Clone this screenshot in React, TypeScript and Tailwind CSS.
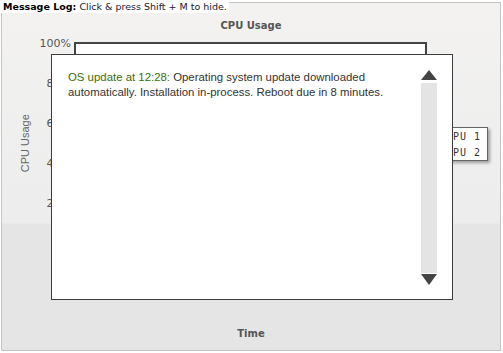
import React from "react";

const verdana = { fontFamily: '"DejaVu Sans", Verdana, sans-serif' };
const arial = { fontFamily: '"Liberation Sans", Arial, sans-serif' };

export default function App() {
  const labels = ["100%", "80%", "60%", "40%", "20%", "0%"];
  return (
    <div className="w-[503px] h-[353px] bg-white relative overflow-hidden">
      {/* chart frame */}
      <div className="absolute left-[1px] top-[2px] w-[500px] h-[349px] border border-[#c4c4c4] bg-[linear-gradient(to_bottom,#f3f2f1_0px,#ededed_220px,#e5e5e5_221px,#e5e5e5_100%)] flex flex-col">
        <div
          className="pt-[17px] h-[30px] text-center text-[10px] leading-[12px] font-bold text-[#555]"
          style={verdana}
        >
          CPU Usage
        </div>
        <div className="mt-[9px] flex relative">
          <div
            className="absolute -left-[4px] top-[95px] -rotate-90 origin-center text-[11px] text-[#666] whitespace-nowrap w-[54px] text-center"
            style={arial}
          >
            CPU Usage
          </div>
          <div
            className="w-[70px] -mt-[4px] flex flex-col gap-[28px] items-end pr-[1px] text-[11px] leading-[12px] text-[#555]"
            style={verdana}
          >
            {labels.map((l) => (
              <div key={l}>{l}</div>
            ))}
          </div>
          <div className="ml-[2px] w-[353px] h-[202px] bg-white border-2 border-[#444]" />
        </div>
        <div className="flex-1" />
        <div
          className="pb-[10px] text-center text-[10px] leading-[12px] font-bold text-[#555]"
          style={verdana}
        >
          Time
        </div>
      </div>

      {/* legend */}
      <div
        className="absolute left-[426px] top-[127px] w-[62px] h-[34px] bg-white border border-[#666] shadow-[2px_2px_3px_rgba(0,0,0,0.35)] flex flex-col items-end pr-[6px] pt-[1px] text-[10px] leading-[16px] tracking-[1px] text-[#333]"
        style={{ fontFamily: '"DejaVu Sans Mono", monospace' }}
      >
        <div>CPU 1</div>
        <div>CPU 2</div>
      </div>

      {/* message log overlay */}
      <div className="absolute left-[51px] top-[54px] w-[402px] h-[246px] bg-white border border-[#3c3c3c] flex">
        <div
          className="flex-1 pl-[16px] pt-[15px] pr-[6px] text-[11.4px] leading-[15px] text-[#333]"
          style={arial}
        >
          <span className="text-[#3a6e0a]">OS update at 12:28:</span> Operating system update
          downloaded automatically. Installation in-process. Reboot due in 8 minutes.
        </div>
        <div className="w-[16px] mr-[15px] pt-[15px] pb-[14px] flex flex-col">
          <svg width="16" height="10" viewBox="0 0 16 10" className="block">
            <polygon points="8,0 16,10 0,10" fill="#444" />
          </svg>
          <div className="mt-[3px] flex-1 bg-[#e4e4e4]" />
          <svg width="16" height="11" viewBox="0 0 16 11" className="block mt-[1px]">
            <polygon points="0,0 16,0 8,11" fill="#444" />
          </svg>
        </div>
      </div>

      {/* message log header */}
      <div
        className="absolute left-0 top-0 pl-[3px] pr-[2px] bg-white text-[9.5px] leading-[13px] text-[#1a1a33] whitespace-nowrap"
        style={verdana}
      >
        <span className="font-bold text-black">Message Log:</span> Click &amp; press Shift + M to hide.
      </div>
    </div>
  );
}
